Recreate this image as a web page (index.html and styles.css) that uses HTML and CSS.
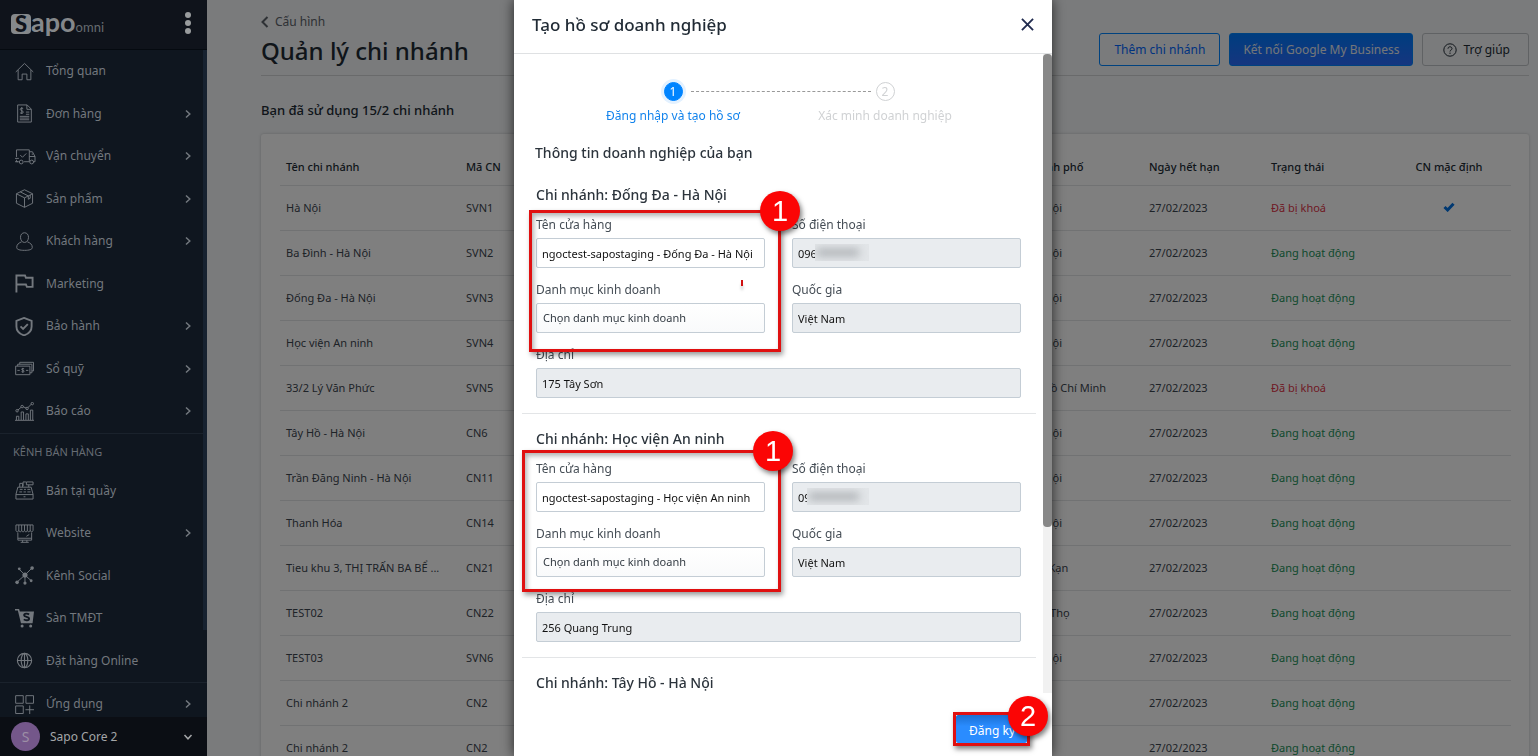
FILE: index.html
```html
<!DOCTYPE html>
<html lang="vi">
<head>
    <meta charset="UTF-8">
    <meta name="viewport" content="width=device-width, initial-scale=1.0">
    <title>Quản lý chi nhánh</title>
    <link rel="stylesheet" href="styles.css">
</head>
<body>
    <svg class="sprite">
        <symbol id="right" viewBox="0 0 8 10"><path d="M2 1.5 5.8 5 2 8.5"/></symbol>
        <symbol id="check" viewBox="0 0 12 10"><path d="M1.5 5 4.6 8 10.5 1.8"/></symbol>
    </svg>

    <div class="layout">
        <aside class="sidebar">
            <div class="sidebar-head">
                <a href="#" class="logo"><span class="logo-s">S</span><span class="logo-apo">apo</span><span class="logo-omni">omni</span></a>
                <button class="dots" aria-label="Menu"><i></i><i></i><i></i></button>
            </div>
            <nav class="nav">
                <ul class="menu menu-main">
                    <li><a href="#">
                        <svg class="icon" viewBox="0 0 20 20"><path d="M.8 10.5 10 1.5l9.2 9M3.3 8.5v10.2h4.2v-6h5v6h4.2V8.5"/></svg>
                        <span>Tổng quan</span></a></li>
                    <li><a href="#">
                        <svg class="icon" viewBox="0 0 20 20"><path d="M2.8 1h10l4.4 4.4V19H2.8zM12.5 1v4.6h4.5M8.6 4.8C7 3.8 5.3 4.6 5.5 5.8c.2 1.5 3.2 1 3.2 2.7 0 1.4-2 1.7-3.4.8M7.1 3.3v7.2M11.5 8.5h3.5M11.5 10.8h3.500M5 13h10M5 14.8h10M5 16.6h10"/></svg>
                        <span>Đơn hàng</span>
                        <svg class="arrow"><use href="#right"/></svg></a></li>
                    <li><a href="#">
                        <svg class="icon icon-wide" viewBox="0 0 22 20"><path d="M1.5 10.500V3h13.500v12.500H9.500M1.500 13.500v2h2.300M0 12h4M15 5h3.300l2.700 5v5.500h-1.500M15 10h6M17.500 7.500h1.500M0 15.500h3.500"/><circle cx="6.500" cy="15.800" r="2"/><circle cx="17.500" cy="15.800" r="2"/><path d="m5.500 8.500 2.300 2.300 4-4"/></svg>
                        <span>Vận chuyển</span>
                        <svg class="arrow"><use href="#right"/></svg></a></li>
                    <li><a href="#">
                        <svg class="icon" viewBox="0 0 20 20"><path d="M10 .8 18.500 5v10L10 19.300 1.500 15V5zM1.500 5 10 9.300 18.500 5M10 9.300v10M5.500 3l8.500 4.300v3.500l2-1V6.300"/></svg>
                        <span>Sản phẩm</span>
                        <svg class="arrow"><use href="#right"/></svg></a></li>
                    <li><a href="#">
                        <svg class="icon" viewBox="0 0 20 20"><path d="M10 .8c2.600 0 4.200 2 4.200 4.800S12.600 11 10 11 5.800 8.400 5.800 5.600 7.400.8 10 .8zM7 10.300C4 11.500 1.800 13 1.800 16.200 1.800 18.500 5 19.300 10 19.300s8.200-.8 8.200-3.100c0-3.200-2.200-4.700-5.200-5.900"/></svg>
                        <span>Khách hàng</span>
                        <svg class="arrow"><use href="#right"/></svg></a></li>
                    <li><a href="#">
                        <svg class="icon icon-bold" viewBox="0 0 20 20"><path d="M1.500 19.500V1.500h9l1 2.500H18.500V13.500h-6l-1-2.500H2"/></svg>
                        <span>Marketing</span></a></li>
                    <li><a href="#">
                        <svg class="icon icon-bold" viewBox="0 0 20 20"><path d="M9.500 1 17.500 4v6c0 4.600-3 7.800-8 9.300C4.500 17.800 1.500 14.600 1.500 10V4zM5.800 9.800l2.700 2.700 5-5"/></svg>
                        <span>Bảo hành</span>
                        <svg class="arrow"><use href="#right"/></svg></a></li>
                    <li><a href="#">
                        <svg class="icon" viewBox="0 0 20 20"><path d="M.7 7.500h15v9h-15zM2.800 7.500v-2h15v9h-2M5 5.500v-2h14.500v9h-1.800M2.500 12h2.500M11.500 12h2.500M9.600 10.300c-1-.8-2.600-.4-2.600.5 0 1.200 2.600.8 2.600 2 0 1-1.600 1.200-2.700.5M8.200 9.500v5"/></svg>
                        <span>Sổ quỹ</span>
                        <svg class="arrow"><use href="#right"/></svg></a></li>
                    <li><a href="#">
                        <svg class="icon" viewBox="0 0 20 20"><path d="M0 19.300h20M1.500 19v-4h2.500v4M6.500 19v-8.500h2.500V19M11.500 19v-6.500H14V19M16.200 19V8.500h2.500V19M3 8.500l3.500-3M8.500 5l3.500 1.500M13.500 6l4-4"/><circle cx="2.200" cy="9.200" r="1.300"/><circle cx="7.500" cy="4.800" r="1.300"/><circle cx="12.700" cy="6.800" r="1.300"/><circle cx="18.200" cy="1.700" r="1.300"/></svg>
                        <span>Báo cáo</span>
                        <svg class="arrow"><use href="#right"/></svg></a></li>
                </ul>
                <h2 class="menu-title">KÊNH BÁN HÀNG</h2>
                <ul class="menu menu-sales">
                    <li><a href="#">
                        <svg class="icon" viewBox="0 0 20 20"><path d="M1 14 3 6.500h14L19 14v5H1zM1 14.300h18M9 16.600h2M5 6.500V2.500h3v4M8.500 5.500V1h3M12 1h7v3h-7zM14.500 4v2.500M5 8.800h3M9.500 8.800h2M13 8.800h3M4.500 11.500h3M9 11.500h2.500M13 11.500h3.500"/></svg>
                        <span>Bán tại quầy</span></a></li>
                    <li><a href="#">
                        <svg class="icon" viewBox="0 0 20 20"><path d="M1 1h18v5.500c0 2.200-3 2.200-3 0 0 2.200-3 2.200-3 0 0 2.200-3 2.200-3 0 0 2.200-3 2.200-3 0 0 2.200-3 2.200-3 0 0 2.200-3 2.200-3 0zM4 1v5.500M7 1v5.500M10 1v5.500M13 1v5.500M16 1v5.500M3 9v8h14.500V9M3 15h14.500M8 17v2.200M12.500 17v2.200M6 19.300h8.500M12 13l3-2"/></svg>
                        <span>Website</span>
                        <svg class="arrow"><use href="#right"/></svg></a></li>
                    <li><a href="#">
                        <svg class="icon icon-nodes" viewBox="0 0 20 20"><path d="M4 3l6.500 6.500L18 2M2 17l8.500-7.500L17 15.500M10.500 10v8"/><circle cx="10.500" cy="9.500" r="2.700"/><circle cx="4.500" cy="3" r="1.500"/><circle cx="18" cy="2.200" r="1.900"/><circle cx="2.200" cy="17.200" r="1.900"/><circle cx="10.500" cy="18" r="1.700"/><circle cx="17" cy="15.500" r="1.500"/></svg>
                        <span>Kênh Social</span></a></li>
                    <li><a href="#">
                        <svg class="icon icon-cart" viewBox="0 0 20 20"><path class="solid" d="M0 0h4.300l.8 2.500H20L18.500 15H6.300L3 1.600H0z"/><path class="letter" d="M14.800 5.800C13.500 4.600 9.600 4.400 9.600 6.500c0 2.300 5.200 1.300 5.200 3.700 0 2.200-4 2-5.500.7"/><circle class="solid" cx="7.500" cy="18" r="1.600"/><circle class="solid" cx="16.500" cy="18" r="1.600"/></svg>
                        <span>Sàn TMĐT</span></a></li>
                    <li><a href="#">
                        <svg class="icon icon-globe" viewBox="0 0 20 20"><circle cx="10" cy="10" r="7.500"/><ellipse cx="10" cy="10" rx="3.500" ry="7.500"/><path d="M2.500 10h15M10 2.500v15"/></svg>
                        <span>Đặt hàng Online</span></a></li>
                </ul>
                <ul class="menu menu-apps">
                    <li><a href="#">
                        <svg class="icon" viewBox="0 0 20 20"><path d="M.7.7h8v8h-8zM11.500.7h8v8h-8zM.7 11.500h8v8h-8zM15.500 11v9M11 15.500h9"/></svg>
                        <span>Ứng dụng</span>
                        <svg class="arrow"><use href="#right"/></svg></a></li>
                </ul>
                <span class="nav-scroll"></span>
            </nav>
            <button class="user">
                <span class="avatar">S</span>
                <span class="user-name">Sapo Core 2</span>
                <svg class="arrow arrow-down" viewBox="0 0 10 8"><path d="M1.500 2 5 5.800 8.500 2"/></svg>
            </button>
        </aside>

        <main class="main">
            <header class="page-head">
                <div>
                    <a href="#" class="back"><svg viewBox="0 0 8 12"><path d="M6.500 1 1.500 6l5 5"/></svg>Cấu hình</a>
                    <h1>Quản lý chi nhánh</h1>
                </div>
                <div class="actions">
                    <button class="btn btn-outline">Thêm chi nhánh</button>
                    <button class="btn btn-primary">Kết nối Google My Business</button>
                    <button class="btn btn-help"><svg viewBox="0 0 14 14"><circle cx="7" cy="7" r="6.200"/><path d="M5 5.700c0-2.600 4-2.500 4 0C9 7 7 7 7 8.500M7 9.600v1.300"/></svg>Trợ giúp</button>
                </div>
            </header>
            <p class="usage">Bạn đã sử dụng 15/2 chi nhánh</p>
            <div class="card">
                <table>
                    <thead>
                        <tr><th class="c-name">Tên chi nhánh</th><th class="c-code">Mã CN</th><th></th><th class="c-city">Thành phố</th><th class="c-date">Ngày hết hạn</th><th class="c-status">Trạng thái</th><th class="c-default">CN mặc định</th></tr>
                    </thead>
                    <tbody>
                        <tr><td>Hà Nội</td><td>SVN1</td><td></td><td>Hà Nội</td><td>27/02/2023</td><td class="locked">Đã bị khoá</td><td class="c-default"><svg class="check"><use href="#check"/></svg></td></tr>
                        <tr><td>Ba Đình - Hà Nội</td><td>SVN2</td><td></td><td>Hà Nội</td><td>27/02/2023</td><td class="active">Đang hoạt động</td><td></td></tr>
                        <tr><td>Đống Đa - Hà Nội</td><td>SVN3</td><td></td><td>Hà Nội</td><td>27/02/2023</td><td class="active">Đang hoạt động</td><td></td></tr>
                        <tr><td>Học viện An ninh</td><td>SVN4</td><td></td><td>Hà Nội</td><td>27/02/2023</td><td class="active">Đang hoạt động</td><td></td></tr>
                        <tr><td>33/2 Lý Văn Phức</td><td>SVN5</td><td></td><td>TP Hồ Chí Minh</td><td>27/02/2023</td><td class="locked">Đã bị khoá</td><td></td></tr>
                        <tr><td>Tây Hồ - Hà Nội</td><td>CN6</td><td></td><td>Hà Nội</td><td>27/02/2023</td><td class="active">Đang hoạt động</td><td></td></tr>
                        <tr><td>Trần Đăng Ninh - Hà Nội</td><td>CN11</td><td></td><td>Hà Nội</td><td>27/02/2023</td><td class="active">Đang hoạt động</td><td></td></tr>
                        <tr><td>Thanh Hóa</td><td>CN14</td><td></td><td>Hà Nội</td><td>27/02/2023</td><td class="active">Đang hoạt động</td><td></td></tr>
                        <tr><td>Tieu khu 3, THỊ TRẤN BA BỂ ...</td><td>CN21</td><td></td><td>Bắc Kạn</td><td>27/02/2023</td><td class="active">Đang hoạt động</td><td></td></tr>
                        <tr><td>TEST02</td><td>CN22</td><td></td><td>Phú Thọ</td><td>27/02/2023</td><td class="active">Đang hoạt động</td><td></td></tr>
                        <tr><td>TEST03</td><td>SVN6</td><td></td><td>Hà Nội</td><td>27/02/2023</td><td class="active">Đang hoạt động</td><td></td></tr>
                        <tr><td>Chi nhánh 2</td><td>CN2</td><td></td><td></td><td>27/02/2023</td><td class="active">Đang hoạt động</td><td></td></tr>
                        <tr><td>Chi nhánh 2</td><td>CN2</td><td></td><td></td><td>27/02/2023</td><td class="active">Đang hoạt động</td><td></td></tr>
                    </tbody>
                </table>
            </div>
        </main>
    </div>

    <div class="backdrop">
        <div class="modal" role="dialog" aria-labelledby="modal-title">
            <div class="modal-head">
                <h2 id="modal-title">Tạo hồ sơ doanh nghiệp</h2>
                <button class="close" aria-label="Đóng"><svg viewBox="0 0 14 14"><path d="m1 1 12 12M13 1 1 13"/></svg></button>
            </div>
            <div class="modal-body">
                <form class="form" id="profile">
                    <ol class="steps">
                        <li class="step current"><span class="num">1</span>Đăng nhập và tạo hồ sơ</li>
                        <li class="step"><span class="num">2</span>Xác minh doanh nghiệp</li>
                    </ol>
                    <h3 class="intro">Thông tin doanh nghiệp của bạn</h3>

                    <section class="branch">
                        <h3>Chi nhánh: Đống Đa - Hà Nội</h3>
                        <div class="fields">
                            <div class="field"><label for="name1">Tên cửa hàng</label><input type="text" id="name1" value="ngoctest-sapostaging - Đống Đa - Hà Nội"></div>
                            <div class="field"><label for="phone1">Số điện thoại</label><input type="text" id="phone1" value="096" readonly><span class="smear"></span></div>
                            <div class="field"><label for="cat1">Danh mục kinh doanh</label><select id="cat1"><option>Chọn danh mục kinh doanh</option></select></div>
                            <div class="field"><label for="country1">Quốc gia</label><input type="text" id="country1" value="Việt Nam" readonly></div>
                            <div class="field wide"><label for="addr1">Địa chỉ</label><input type="text" id="addr1" value="175 Tây Sơn" readonly></div>
                        </div>
                        <div class="mark"><span class="badge">1</span><span class="tick"></span></div>
                    </section>

                    <section class="branch">
                        <h3>Chi nhánh: Học viện An ninh</h3>
                        <div class="fields">
                            <div class="field"><label for="name2">Tên cửa hàng</label><input type="text" id="name2" value="ngoctest-sapostaging - Học viện An ninh"></div>
                            <div class="field"><label for="phone2">Số điện thoại</label><input type="text" id="phone2" value="09" readonly><span class="smear smear-long"></span></div>
                            <div class="field"><label for="cat2">Danh mục kinh doanh</label><select id="cat2"><option>Chọn danh mục kinh doanh</option></select></div>
                            <div class="field"><label for="country2">Quốc gia</label><input type="text" id="country2" value="Việt Nam" readonly></div>
                            <div class="field wide"><label for="addr2">Địa chỉ</label><input type="text" id="addr2" value="256 Quang Trung" readonly></div>
                        </div>
                        <div class="mark mark-wide"><span class="badge">1</span></div>
                    </section>

                    <section class="branch">
                        <h3>Chi nhánh: Tây Hồ - Hà Nội</h3>
                    </section>
                </form>
                <div class="scrollbar"><span class="thumb"></span></div>
            </div>
            <div class="modal-foot">
                <div class="submit">
                    <button class="btn btn-submit" form="profile">Đăng ký</button>
                    <span class="badge">2</span>
                </div>
            </div>
        </div>
    </div>
</body>
</html>
```

FILE: styles.css
```css
* {
    margin: 0;
    padding: 0;
    box-sizing: border-box;
}

body {
    font-family: "Noto Sans", "Open Sans", sans-serif;
    font-size: 12px;
    line-height: 20px;
    color: #212b35;
    background: #f4f6f8;
    height: 100vh;
    overflow: hidden;
}

button, input, select {
    font: inherit;
    color: inherit;
}

button {
    border: none;
    background: none;
    cursor: pointer;
}

a {
    color: inherit;
    text-decoration: none;
}

ul, ol {
    list-style: none;
}

svg {
    fill: none;
    stroke: currentColor;
}

.sprite {
    display: none;
}

.layout {
    display: flex;
    height: 100vh;
}

/* sidebar */
.sidebar {
    position: relative;
    z-index: 2;
    display: flex;
    flex-direction: column;
    flex: none;
    width: 207px;
    background: #0f161f;
    color: #73787e;
}

.sidebar-head {
    display: flex;
    justify-content: space-between;
    align-items: center;
    height: 50px;
    padding: 0 14px 4px 11px;
    border-bottom: 1px solid #050a10;
    background: #0f131b;
}

.logo {
    display: flex;
    align-items: baseline;
    font-family: Lato, sans-serif;
    color: #85888b;
}

.logo-s {
    width: 20px;
    height: 20px;
    border-radius: 4px;
    background: #85888b;
    color: #0f131b;
    font-size: 22px;
    font-weight: 900;
    line-height: 20px;
    text-align: center;
}

.logo-apo {
    font-size: 27px;
    font-weight: bold;
    line-height: 28px;
}

.logo-omni {
    font-size: 13px;
    color: #666b70;
}

.dots {
    display: flex;
    flex-direction: column;
    gap: 2px;
    padding: 2px;
}

.dots i {
    width: 6px;
    height: 6px;
    border-radius: 50%;
    background: #999c9e;
}

.nav {
    position: relative;
    display: flex;
    flex-direction: column;
    flex: 1;
    min-height: 0;
    overflow: hidden;
}

.menu {
    display: flex;
    flex-direction: column;
}

.menu li {
    flex: 1;
}

.menu-main {
    flex: 9;
}

.menu-sales {
    flex: 5;
}

.menu-apps {
    height: 35px;
    border-top: 1px solid #1a222c;
}

.menu a {
    display: flex;
    align-items: center;
    height: 100%;
    min-height: 42px;
    padding: 0 15px;
}

.menu span {
    flex: 1;
}

.icon {
    width: 19px;
    height: 19px;
    margin-right: 12px;
}

.icon-wide {
    width: 21px;
    margin-right: 10px;
}

.icon-bold {
    stroke-width: 2;
}

.icon-globe {
    stroke-width: 1.2;
}

.icon-nodes circle, .icon-cart .solid {
    fill: currentColor;
    stroke: none;
}

.icon-cart .letter {
    stroke: #0f161f;
    stroke-width: 2;
}

.arrow {
    width: 8px;
    height: 10px;
    stroke-width: 1.5;
}

.menu-title {
    height: 37px;
    padding-left: 13px;
    border-top: 1px solid #1a222c;
    font-size: 11px;
    font-weight: normal;
    line-height: 36px;
    color: #666c73;
}

.nav-scroll {
    position: absolute;
    top: 0;
    right: 0;
    width: 4px;
    height: 87%;
    background: #172230;
}

.user {
    display: flex;
    align-items: center;
    height: 39px;
    padding: 0 14px 0 11px;
    background: #0b0e14;
    color: #a4a6a8;
    text-align: left;
}

.avatar {
    width: 29px;
    height: 29px;
    border-radius: 50%;
    background: #74578a;
    color: #9c8fa6;
    font-size: 14px;
    line-height: 29px;
    text-align: center;
}

.user-name {
    flex: 1;
    margin-left: 10px;
}

.arrow-down {
    width: 10px;
    height: 8px;
}

/* page */
.main {
    flex: 1;
    min-width: 0;
    padding: 12px 9px 0 54px;
}

.page-head {
    display: flex;
    justify-content: space-between;
    height: 64px;
    border-bottom: 1px solid #d3d5d7;
}

.back {
    display: flex;
    align-items: center;
    gap: 6px;
    color: #5c636a;
}

.back svg {
    width: 8px;
    height: 12px;
    stroke-width: 2;
}

h1 {
    font-size: 24px;
    font-weight: 500;
    line-height: 38px;
}

.actions {
    display: flex;
    gap: 9px;
    padding-top: 21px;
}

.btn {
    height: 33px;
    padding: 0 14px;
    border: 1px solid #0084ff;
    border-radius: 3px;
}

.btn-outline {
    color: #0067ff;
}

.btn-primary {
    padding: 0 13px;
    background: linear-gradient(#007bff, #2b6bff);
    color: #e8ecf2;
}

.btn-help {
    display: flex;
    align-items: center;
    gap: 6px;
    padding: 0 18px 0 20px;
    border-color: #c0c4c8;
}

.btn-help svg {
    width: 14px;
    height: 14px;
}

.usage {
    margin: 24px 0 14px;
    font-size: 13px;
    font-weight: 500;
}

.card {
    padding: 16px 18px 0 19px;
    border-radius: 3px;
    background: #fff;
    box-shadow: 0 0 3px rgba(0, 0, 0, 0.2);
}

table {
    width: 100%;
    table-layout: fixed;
    border-collapse: collapse;
}

th, td {
    height: 45px;
    padding: 0 6px;
    border-bottom: 1px solid #e3e5e7;
    font-size: 11px;
    text-align: left;
    white-space: nowrap;
}

td {
    color: #3d4650;
}

th {
    height: 35px;
    font-weight: 500;
}

.c-name, .c-code {
    width: 180px;
}

.c-city, .c-date, .c-status {
    width: 122px;
}

.c-default {
    width: 124px;
    text-align: center;
}

.locked {
    color: #e0354a;
}

.active {
    color: #22935a;
}

.check {
    width: 12px;
    height: 10px;
    color: #0071e3;
    stroke-width: 3;
}

/* dialog */
.backdrop {
    position: fixed;
    inset: 0;
    z-index: 1;
    display: flex;
    justify-content: center;
    padding-left: 28px;
    background: rgba(0, 0, 0, 0.5);
}

.modal {
    display: flex;
    flex-direction: column;
    width: 538px;
    background: #fff;
    box-shadow: 0 0 12px rgba(0, 0, 0, 0.7);
}

.modal-head {
    display: flex;
    justify-content: space-between;
    align-items: center;
    height: 54px;
    padding: 0 18px 4px;
    border-bottom: 1px solid #dfe1e3;
}

.modal-head h2 {
    font-size: 17px;
    font-weight: 500;
}

.close {
    display: flex;
    color: #212b4f;
}

.close svg {
    width: 13px;
    height: 13px;
    stroke-width: 2;
}

.modal-body {
    display: flex;
    flex: 1;
    min-height: 0;
}

.form {
    flex: 1;
    padding: 28px 7px 0 8px;
    overflow: hidden;
}

.scrollbar {
    width: 9px;
    background: #f1f1f1;
}

.thumb {
    display: block;
    height: 74%;
    border-radius: 4px;
    background: #888;
}

.steps {
    display: flex;
    justify-content: center;
}

.step {
    position: relative;
    width: 212px;
    color: #d0d2d4;
    text-align: center;
}

.num {
    display: block;
    width: 19px;
    height: 19px;
    margin: 0 auto 5px;
    border: 1px solid #d0d2d4;
    border-radius: 50%;
    line-height: 17px;
}

.current {
    color: #1283ec;
}

.current .num {
    border-color: #0084ff;
    background: #0084ff;
    box-shadow: 0 0 0 3px #e3f1ff;
    color: #fff;
}

.current::after {
    content: "";
    position: absolute;
    top: 9px;
    left: 124px;
    width: 180px;
    border-top: 1px dashed #999;
}

.form h3 {
    font-size: 14px;
    font-weight: 500;
    line-height: 22px;
    color: #2c343c;
}

.form .intro {
    margin: 16px 0 6px;
    padding-left: 13px;
}

.branch {
    position: relative;
    padding: 14px 15px 15px 14px;
    border-bottom: 1px solid #e3e5e7;
}

.fields {
    display: grid;
    grid-template-columns: 1fr 1fr;
    gap: 12px 27px;
    margin-top: 9px;
}

.field {
    position: relative;
    display: flex;
    flex-direction: column;
    gap: 3px;
}

.wide {
    grid-column: span 2;
}

.field label {
    color: #454d55;
}

.field input, .field select {
    width: 100%;
    height: 30px;
    padding: 0 5px;
    border: 1px solid #c4cdd5;
    border-radius: 2px;
    background: #fff;
    color: #111;
    font-size: 11px;
}

.field input[readonly] {
    background: #e9ecef;
}

.field select {
    appearance: none;
    padding: 0 6px;
    background: linear-gradient(#fff, #f9fafb);
    color: #333b43;
}

/* hidden digits */
.smear {
    position: absolute;
    left: 23px;
    bottom: 7px;
    width: 54px;
    height: 17px;
    background: #e2e5e8;
    overflow: hidden;
}

.smear::before {
    content: "";
    display: block;
    width: 42px;
    height: 7px;
    margin: 5px 0 0 2px;
    background: #a9adb1;
    filter: blur(4px);
}

.smear-long {
    left: 15px;
    width: 62px;
}

.smear-long::before {
    width: 50px;
}

/* red callouts */
.mark {
    position: absolute;
    top: 40px;
    left: 7px;
    width: 252px;
    height: 142px;
    border: 3px solid #e01010;
    box-shadow: 2px 3px 5px rgba(0, 0, 0, 0.4), inset 2px 3px 5px rgba(0, 0, 0, 0.3);
    pointer-events: none;
}

.mark-wide {
    top: 36px;
    left: 0;
    width: 259px;
}

.badge {
    position: absolute;
    top: -22px;
    right: -22px;
    width: 40px;
    height: 40px;
    border-radius: 50%;
    background: #fb0505;
    box-shadow: 2px 3px 5px rgba(0, 0, 0, 0.5);
    color: #fff;
    font-family: "Liberation Sans", Arial, sans-serif;
    font-size: 29px;
    line-height: 41px;
    text-align: center;
}

.mark-wide .badge {
    right: -15px;
}

.tick {
    position: absolute;
    top: 67px;
    right: 35px;
    width: 2px;
    height: 6px;
    background: #d01010;
    box-shadow: 0 4px 3px rgba(0, 0, 0, 0.2);
}

.modal-foot {
    display: flex;
    justify-content: flex-end;
    height: 63px;
    padding: 19px 22px 0 0;
}

.submit {
    position: relative;
    height: 34px;
    border: 3px solid #e01010;
    box-shadow: 2px 3px 5px rgba(0, 0, 0, 0.5);
}

.btn-submit {
    height: 28px;
    padding: 4px 12px 0 13px;
    border: none;
    border-radius: 2px;
    background: linear-gradient(#1a6fd0, #2a8cff 40%);
    color: #fff;
}

.submit .badge {
    top: -19px;
    right: -21px;
}
```
